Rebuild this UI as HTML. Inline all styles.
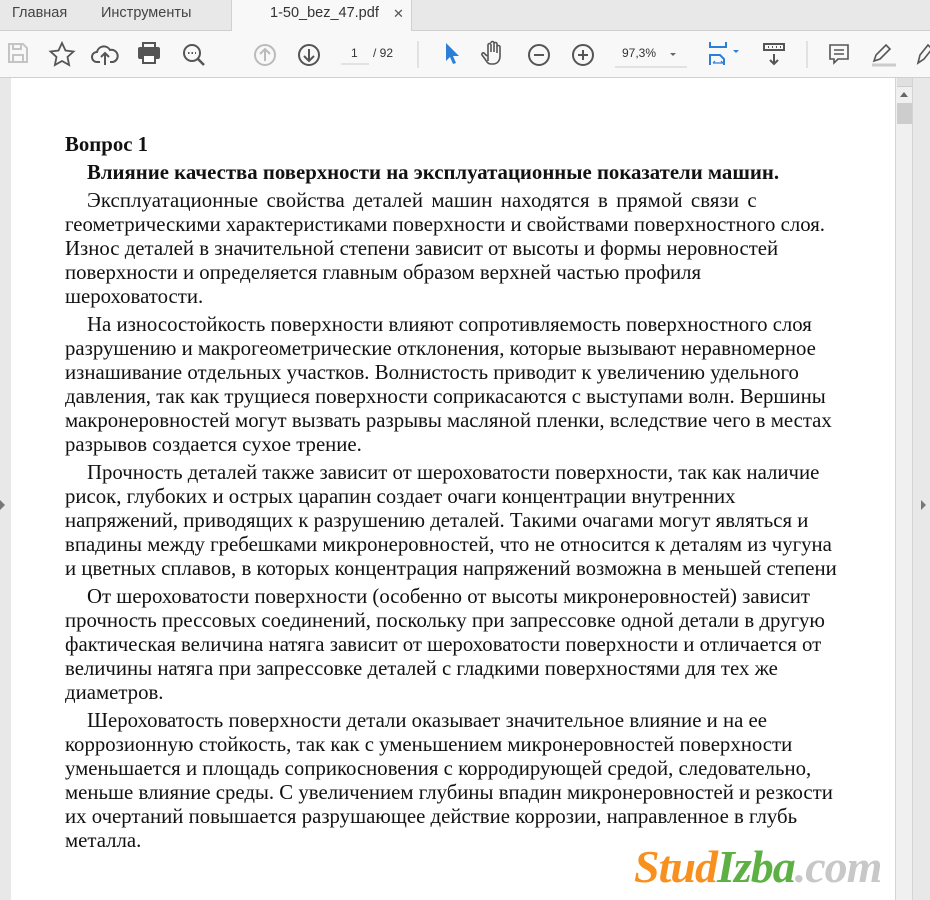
<!DOCTYPE html>
<html><head><meta charset="utf-8"><style>
*{margin:0;padding:0;box-sizing:border-box}
body{width:930px;height:900px;overflow:hidden;background:#e8e8e8;font-family:"Liberation Sans",sans-serif;position:relative}
.tabs{position:absolute;left:0;top:0;width:930px;height:31px;background:#e8e8e8;border-bottom:1px solid #cfcfcf}
.tab{position:absolute;top:5px;font-size:14.5px;color:#444}
.atab{position:absolute;left:231px;top:0;width:181px;height:32px;background:#f8f8f8;border-left:1px solid #d0d0d0;border-right:1px solid #d0d0d0}
.tool{position:absolute;left:0;top:31px;width:930px;height:47px;background:#f8f8f8;border-bottom:1px solid #d0d0d0}
.page{position:absolute;left:11px;top:78px;width:884px;height:822px;background:#fff}
.sb{position:absolute;left:895px;top:78px;width:18px;height:822px;background:#f0f0f0;border-left:1px solid #d4d4d4;border-right:1px solid #d4d4d4}
.txt{position:absolute;left:65px;top:133px;font-family:"Liberation Serif",serif;font-size:20.8px;color:#111;line-height:24px;white-space:nowrap}
.txt p{margin-top:4px}
.b{font-weight:bold}
</style></head><body>
<div class="tabs">
<span class="tab" style="left:12px">Главная</span>
<span class="tab" style="left:101px">Инструменты</span>
<div class="atab"><span class="tab" style="left:38px;color:#333">1-50_bez_47.pdf</span><span class="tab" style="left:161px;color:#555;font-size:13px;top:6px">✕</span></div>
</div>
<div class="tool">
<svg width="930" height="47" style="position:absolute;left:0;top:0" fill="none" stroke-width="2">
<path d="M9 13h14l4 4v14H9z M13 13v5h8v-5 M13 31v-7h10v7" stroke="#c4c4c4"/>
<path d="M62 12l3.5 7.5 8 1-6 5.5 1.6 8-7.1-4-7.1 4 1.6-8-6-5.5 8-1z" stroke="#555" stroke-width="1.8"/>
<path d="M100 31h-3a5 5 0 0 1 0-10 7 7 0 0 1 13-2 5 5 0 0 1 3 12h-3 M105 34v-11 M101 26l4-4 4 4" stroke="#555"/>
<path d="M143 16v-4h12v4" stroke="#555"/><rect x="139" y="17" width="20" height="10" rx="1" fill="#555" stroke="#555"/><rect x="143" y="24" width="12" height="8" fill="#fff" stroke="#555"/>
<circle cx="192" cy="22" r="8" stroke="#555"/><path d="M198 28l6 6" stroke="#555" stroke-width="2.5"/><path d="M188 22h1.5M191.5 22h1.5M195 22h1" stroke="#555"/>
<circle cx="265" cy="24" r="10" stroke="#bbb"/><path d="M265 30v-12M260 23l5-5 5 5" stroke="#bbb"/>
<circle cx="309" cy="24" r="10" stroke="#555"/><path d="M309 18v12M304 25l5 5 5-5" stroke="#555"/>
<path d="M341 33h28" stroke="#ccc" stroke-width="1"/>
<path d="M418 10v27" stroke="#ccc" stroke-width="1"/>
<path d="M446 12v18l4-4 3 7 3-1-3-7h6z" fill="#2c7fd6" stroke="none"/>
<path d="M488 30v-8m0 0v-8a1.5 1.5 0 0 1 3 0v7m0-9a1.5 1.5 0 0 1 3 0v9m0-8a1.5 1.5 0 0 1 3 0v9m0-6a1.5 1.5 0 0 1 3 0v9c0 5-3 8-7 8h-2c-3 0-4-2-6-5l-3-4a1.5 1.5 0 0 1 2-2l3 3" stroke="#555" stroke-width="1.6"/>
<circle cx="539" cy="24" r="10" stroke="#555"/><path d="M534 24h10" stroke="#555"/>
<circle cx="583" cy="24" r="10" stroke="#555"/><path d="M578 24h10M583 19v10" stroke="#555"/>
<path d="M615 36h72" stroke="#ccc" stroke-width="1"/>
<path d="M670 22h6l-3 3z" fill="#666" stroke="none"/>
<path d="M710 11v5h16v-5 M710 34v-10h10l4 4v6" stroke="#2c7fd6"/><path d="M713 32h10M713 32l2-2M723 32l-2-2" stroke="#2c7fd6" stroke-width="1.2"/>
<path d="M733 19h6l-3 3z" fill="#2c7fd6" stroke="none"/>
<rect x="764" y="13" width="20" height="6" stroke="#555"/><path d="M768 16h1M772 16h1M776 16h1M780 16h1" stroke="#555"/><path d="M774 23v10M770 29l4 4 4-4" stroke="#555"/>
<path d="M807 10v27" stroke="#ccc" stroke-width="1"/>
<path d="M830 14h18v14h-10l-4 4v-4h-4z M834 19h10M834 23h10" stroke="#555" stroke-width="1.6"/>
<path d="M874 30l2-6 10-10 4 4-10 10z" stroke="#555" stroke-width="1.6"/><path d="M872 34h24" stroke="#ccc" stroke-width="3"/>
<path d="M918 32l2-8 8-10 4 4-8 10z M918 32l6-4" stroke="#555" stroke-width="1.6"/>
</svg>
<span style="position:absolute;left:351px;top:15px;font-size:12px;color:#333">1</span>
<span style="position:absolute;left:373px;top:15px;font-size:12px;color:#333">/ 92</span>
<span style="position:absolute;left:622px;top:15px;font-size:12px;color:#333">97,3%</span>
</div>
<div class="page"></div>
<div class="sb"><div style="position:absolute;left:1px;top:0;width:15px;height:9px;background:#e0e0e0;border-bottom:1px solid #ccc"></div>
<div style="position:absolute;left:4px;top:14px;width:0;height:0;border-left:4px solid transparent;border-right:4px solid transparent;border-bottom:5px solid #666"></div>
<div style="position:absolute;left:1px;top:25px;width:15px;height:21px;background:#cdcdcd"></div></div>
<div style="position:absolute;left:0;top:500px;width:0;height:0;border-top:5px solid transparent;border-bottom:5px solid transparent;border-left:5px solid #777"></div>
<div style="position:absolute;left:921px;top:500px;width:0;height:0;border-top:5px solid transparent;border-bottom:5px solid transparent;border-left:5px solid #777"></div>
<div class="txt">
<div class="b">Вопрос 1</div>
<p class="b" style="padding-left:22px">Влияние качества поверхности на эксплуатационные показатели машин.</p>
<p><span style="padding-left:22px;word-spacing:3px;letter-spacing:0.1px">Эксплуатационные свойства деталей машин находятся в прямой связи с</span><br>геометрическими характеристиками поверхности и свойствами поверхностного слоя.<br>Износ деталей в значительной степени зависит от высоты и формы неровностей<br>поверхности и определяется главным образом верхней частью профиля<br>шероховатости.</p>
<p><span style="padding-left:22px">На износостойкость поверхности влияют сопротивляемость поверхностного слоя</span><br>разрушению и макрогеометрические отклонения, которые вызывают неравномерное<br>изнашивание отдельных участков. Волнистость приводит к увеличению удельного<br>давления, так как трущиеся поверхности соприкасаются с выступами волн. Вершины<br>макронеровностей могут вызвать разрывы масляной пленки, вследствие чего в местах<br>разрывов создается сухое трение.</p>
<p><span style="padding-left:22px">Прочность деталей также зависит от шероховатости поверхности, так как наличие</span><br>рисок, глубоких и острых царапин создает очаги концентрации внутренних<br>напряжений, приводящих к разрушению деталей. Такими очагами могут являться и<br>впадины между гребешками микронеровностей, что не относится к деталям из чугуна<br>и цветных сплавов, в которых концентрация напряжений возможна в меньшей степени</p>
<p><span style="padding-left:22px">От шероховатости поверхности (особенно от высоты микронеровностей) зависит</span><br>прочность прессовых соединений, поскольку при запрессовке одной детали в другую<br>фактическая величина натяга зависит от шероховатости поверхности и отличается от<br>величины натяга при запрессовке деталей с гладкими поверхностями для тех же<br>диаметров.</p>
<p><span style="padding-left:22px">Шероховатость поверхности детали оказывает значительное влияние и на ее</span><br>коррозионную стойкость, так как с уменьшением микронеровностей поверхности<br>уменьшается и площадь соприкосновения с корродирующей средой, следовательно,<br>меньше влияние среды. С увеличением глубины впадин микронеровностей и резкости<br>их очертаний повышается разрушающее действие коррозии, направленное в глубь<br>металла.</p>
</div>
<div style="position:absolute;left:634px;top:842px;font-family:'Liberation Serif',serif;font-style:italic;font-weight:bold;font-size:46px;letter-spacing:-1px;white-space:nowrap;line-height:50px"><span style="color:#f7901e">Stud</span><span style="color:#5db043">Izba</span><span style="color:#c8c8c8">.com</span></div>
</body></html>
